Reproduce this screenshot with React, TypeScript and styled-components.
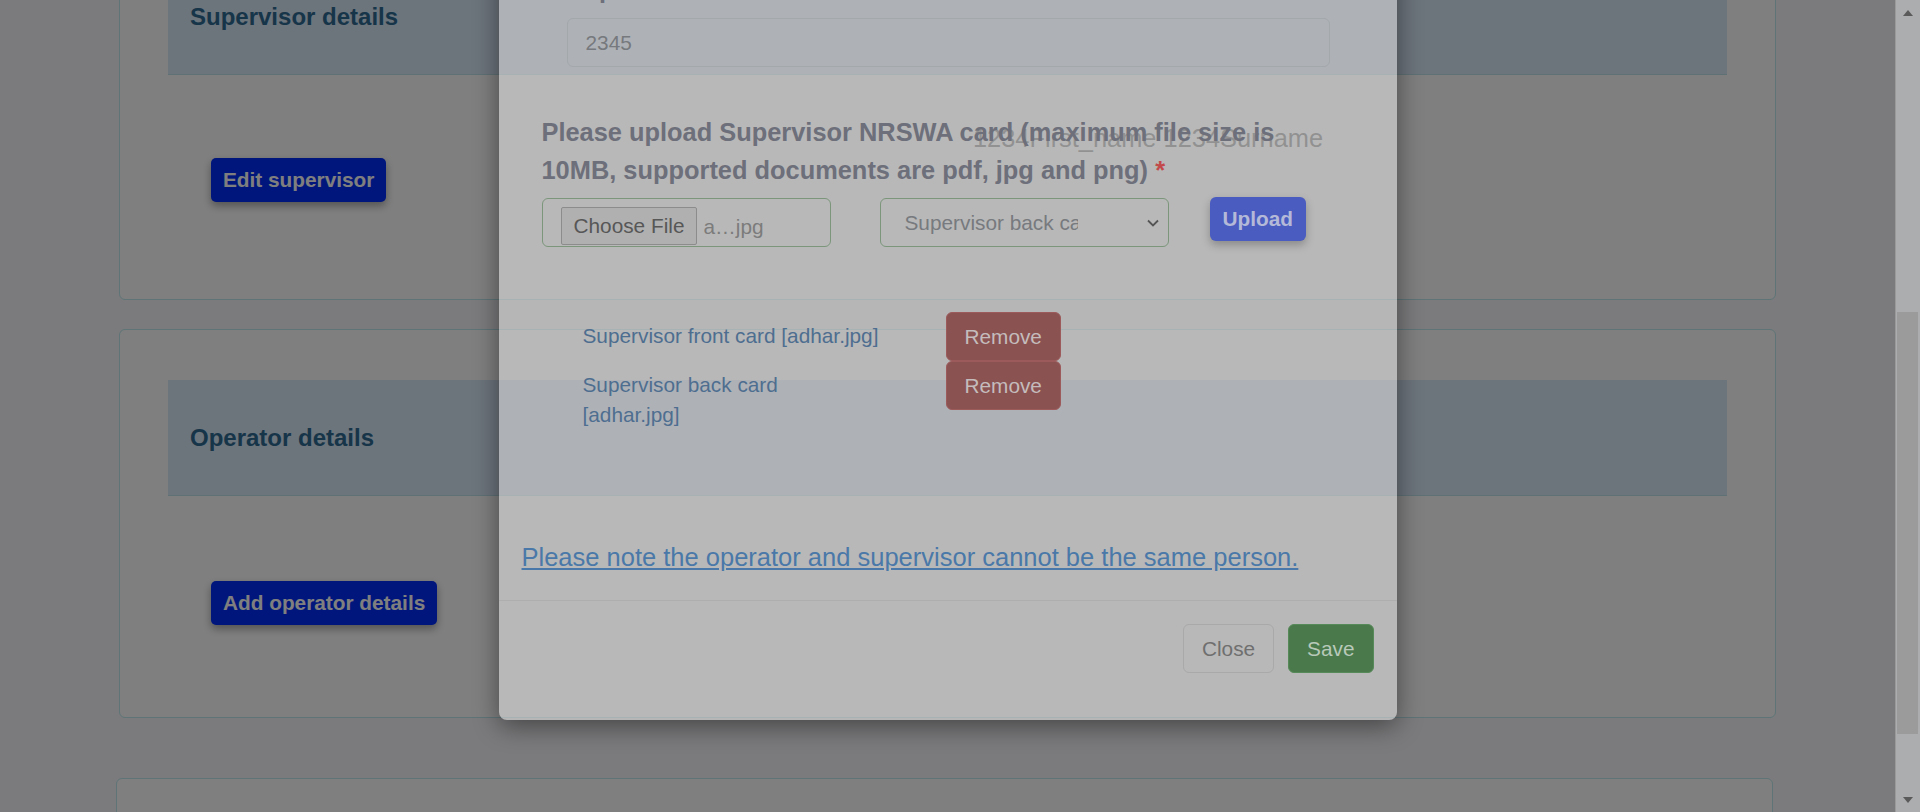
import React from 'react';
import styled, { createGlobalStyle } from 'styled-components';

const GlobalStyle = createGlobalStyle`
  html, body {
    margin: 0;
    padding: 0;
    overflow: hidden;
  }
  body {
    font-family: "Liberation Sans", Arial, sans-serif;
  }
  * {
    box-sizing: border-box;
  }
`;

const Screen = styled.div`
  display: flex;
  width: 1920px;
  height: 812px;
  overflow: hidden;
`;

const Viewport = styled.div`
  position: relative;
  flex: 1;
  overflow: hidden;
  background: #f6f7fa;
`;

const Page = styled.div`
  width: 1657px;
  margin: -92px auto 0;
`;

const Card = styled.section<{ $gap?: number; $shift?: number }>`
  background: #fff;
  border: 1px solid #bde9ee;
  border-radius: 6px;
  padding: 50px 48px 0;
  margin-bottom: ${p => p.$gap ?? 0}px;
  margin-left: ${p => p.$shift ?? 0}px;
  margin-right: ${p => -(p.$shift ?? 0)}px;
  min-height: 120px;
`;

const CardHeader = styled.div`
  height: 116px;
  display: flex;
  align-items: center;
  padding-left: 22px;
  background: #d8e8f8;
  border-bottom: 1px solid #bfe3ea;
`;

const CardTitle = styled.h5`
  margin: 0;
  font-size: 24px;
  font-weight: 700;
  color: #2f6a92;
`;

const CardBody = styled.div<{ $top: number; $bottom: number }>`
  display: grid;
  grid-template-columns: 762px 1fr;
  align-items: start;
  padding: 0 0 ${p => p.$bottom}px 43px;

  & > button {
    margin-top: ${p => p.$top}px;
  }
`;

const PrimaryButton = styled.button`
  justify-self: start;
  height: 44px;
  padding: 0 12px;
  border: none;
  border-radius: 5px;
  background: #002cf8;
  color: #fff;
  font-family: inherit;
  font-size: 20.8px;
  font-weight: 700;
  box-shadow: 0 4px 8px rgba(0, 0, 0, 0.35);
`;

const NameText = styled.div`
  margin-top: 44px;
  font-size: 25.4px;
  line-height: 38px;
  color: #707070;
`;

const Backdrop = styled.div`
  position: absolute;
  inset: 0;
  background: rgba(0, 0, 0, 0.5);
`;

const Modal = styled.div`
  position: absolute;
  top: -46px;
  left: 0;
  right: 0;
  margin: 0 auto;
  width: 898px;
  background: rgba(255, 255, 255, 0.45);
  border-radius: 8px;
  box-shadow: 0 6px 26px rgba(0, 0, 0, 0.45);
  font-size: 20.8px;
`;

const ModalBody = styled.div`
  padding: 16px 0 24px;
`;

const NumberField = styled.div`
  padding: 0 67px 0 68px;
`;

const FieldLabel = styled.div`
  font-size: 25.4px;
  line-height: 38px;
  font-weight: 700;
  color: #6d6f7a;
  margin-bottom: 10px;
`;

const TextInput = styled.div`
  height: 49px;
  display: flex;
  align-items: center;
  padding-left: 18px;
  border: 1px solid #a3a8ab;
  border-radius: 6px;
  color: #76797d;
`;

const UploadSection = styled.div`
  margin-top: 46px;
  padding-left: 43px;
`;

const UploadHeading = styled.div`
  font-size: 25.4px;
  line-height: 38px;
  font-weight: 700;
  color: #6d6f7a;
  width: 760px;
`;

const Required = styled.span`
  color: #c24a4a;
`;

const UploadRow = styled.div`
  display: flex;
  align-items: flex-start;
  margin-top: 9px;
`;

const FieldBox = styled.div<{ $gap: number }>`
  width: 289px;
  height: 49px;
  display: flex;
  align-items: center;
  border: 1.5px solid #7b967b;
  border-radius: 6px;
  margin-right: ${p => p.$gap}px;
  white-space: nowrap;
  overflow: hidden;
`;

const ChooseButton = styled.span`
  align-self: flex-end;
  margin: 0 6px 1px 18px;
  height: 38px;
  padding: 0 12px;
  display: flex;
  align-items: center;
  background: #b0b0b0;
  border: 1px solid #8c8c8c;
  border-radius: 2px;
  color: #575757;
`;

const FileName = styled.span`
  color: #7c7c7c;
  margin-top: 8px;
`;

const SelectText = styled.span`
  width: 173px;
  margin-left: 24px;
  overflow: hidden;
  color: #777a7e;
`;

const Chevron = styled.svg`
  margin-left: auto;
  margin-right: 8px;
`;

const UploadButton = styled.button`
  margin-top: -1px;
  height: 44px;
  padding: 0 13px;
  border: none;
  border-radius: 6px;
  background: #4a5cc0;
  color: #b4b9d8;
  font-family: inherit;
  font-size: 20.8px;
  font-weight: 700;
  box-shadow: 0 4px 8px rgba(0, 0, 0, 0.25);
`;

const FileList = styled.div`
  margin-top: 65px;
  padding-left: 84px;
  display: grid;
  grid-template-columns: 363px auto;
  justify-content: start;
`;

const FileLabel = styled.div`
  padding-top: 9px;
  line-height: 30px;
  color: #4e6e90;
`;

const ModalButton = styled.button<{ $variant: 'danger' | 'light' | 'success' }>`
  height: 49px;
  padding: 0 18px;
  border-radius: 6px;
  font-family: inherit;
  font-size: 20.8px;
  border: 1px solid
    ${p => (p.$variant === 'danger' ? '#9c5a5a' : p.$variant === 'success' ? '#578a59' : '#a9a9a9')};
  background: ${p => (p.$variant === 'danger' ? '#8b5252' : p.$variant === 'success' ? '#4a7a4c' : 'transparent')};
  color: ${p => (p.$variant === 'danger' ? '#c4bcbc' : p.$variant === 'success' ? '#b8c9b9' : '#6f6f6f')};
`;

const RemoveButton = styled(ModalButton)`
  justify-self: start;
  padding: 0 18px;
`;

const Note = styled.a`
  display: block;
  margin-top: 108px;
  padding-left: 23px;
  font-size: 25.5px;
  line-height: 38px;
  color: #4a78a8;
  text-decoration: underline;
`;

const ModalFooter = styled.div`
  display: flex;
  justify-content: flex-end;
  gap: 14px;
  padding: 23px 23px 47px;
  border-top: 1px solid #aeaeae;
`;

const Scrollbar = styled.div`
  width: 25px;
  display: flex;
  flex-direction: column;
  background: #acadaf;
  border-left: 1px solid #9a9a9a;
`;

const ScrollArrow = styled.div`
  height: 25px;
  display: flex;
  align-items: center;
  justify-content: center;
`;

const ScrollTrack = styled.div`
  flex: 1;
  padding: 287px 2px 0 1px;
`;

const ScrollThumb = styled.div`
  height: 422px;
  background: #9b9b9b;
`;

const files = [
  { label: <>Supervisor front card [adhar.jpg]</> },
  { label: <>Supervisor back card<br />[adhar.jpg]</> },
];

const App: React.FC = () => {
  return (
    <>
      <GlobalStyle />
      <Screen>
        <Viewport>
          <Page>
            <Card $gap={29}>
              <CardHeader>
                <CardTitle>Supervisor details</CardTitle>
              </CardHeader>
              <CardBody $top={83} $bottom={97}>
                <PrimaryButton>Edit supervisor</PrimaryButton>
                <NameText>1234First_name 1234Surname</NameText>
              </CardBody>
            </Card>
            <Card $gap={60}>
              <CardHeader>
                <CardTitle>Operator details</CardTitle>
              </CardHeader>
              <CardBody $top={85} $bottom={92}>
                <PrimaryButton>Add operator details</PrimaryButton>
              </CardBody>
            </Card>
            <Card $shift={-3} />
          </Page>

          <Backdrop />

          <Modal>
            <ModalBody>
              <NumberField>
                <FieldLabel>Supervisor NRSWA card number</FieldLabel>
                <TextInput>2345</TextInput>
              </NumberField>

              <UploadSection>
                <UploadHeading>
                  Please upload Supervisor NRSWA card (maximum file size is 10MB, supported documents are pdf, jpg and png) <Required>*</Required>
                </UploadHeading>
                <UploadRow>
                  <FieldBox $gap={49}>
                    <ChooseButton>Choose File</ChooseButton>
                    <FileName>a…jpg</FileName>
                  </FieldBox>
                  <FieldBox $gap={41}>
                    <SelectText>Supervisor back card</SelectText>
                    <Chevron width="14" height="14" viewBox="0 0 14 14">
                      <path d="M2 4.5 L7 9.5 L12 4.5" fill="none" stroke="#555" strokeWidth="1.8" />
                    </Chevron>
                  </FieldBox>
                  <UploadButton>Upload</UploadButton>
                </UploadRow>
              </UploadSection>

              <FileList>
                {files.map((f, i) => (
                  <React.Fragment key={i}>
                    <FileLabel>{f.label}</FileLabel>
                    <RemoveButton $variant="danger">Remove</RemoveButton>
                  </React.Fragment>
                ))}
              </FileList>

              <Note href="#">Please note the operator and supervisor cannot be the same person.</Note>
            </ModalBody>
            <ModalFooter>
              <ModalButton $variant="light">Close</ModalButton>
              <ModalButton $variant="success">Save</ModalButton>
            </ModalFooter>
          </Modal>
        </Viewport>

        <Scrollbar>
          <ScrollArrow>
            <svg width="12" height="8" viewBox="0 0 12 8">
              <path d="M1 7 L6 1 L11 7 Z" fill="#5a5a5a" />
            </svg>
          </ScrollArrow>
          <ScrollTrack>
            <ScrollThumb />
          </ScrollTrack>
          <ScrollArrow>
            <svg width="12" height="8" viewBox="0 0 12 8">
              <path d="M1 1 L11 1 L6 7 Z" fill="#5a5a5a" />
            </svg>
          </ScrollArrow>
        </Scrollbar>
      </Screen>
    </>
  );
};

export default App;
